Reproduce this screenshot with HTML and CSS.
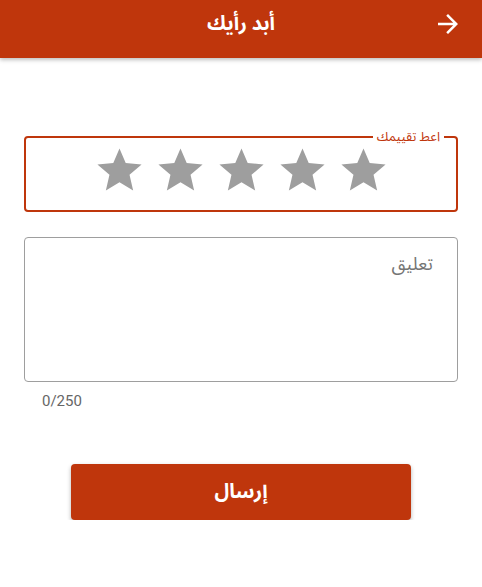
FILE: index.html
```html
<!DOCTYPE html>
<html lang="ar" dir="rtl">
<head>
<meta charset="utf-8">
<link rel="stylesheet" href="styles.css">
</head>
<body>
<header class="appbar">
  <button class="back" aria-label="رجوع">
    <svg viewBox="0 0 24 24" width="30" height="30"><path fill="#fff" d="M12 4l-1.41 1.41L16.17 11H4v2h12.17l-5.58 5.59L12 20l8-8z"/></svg>
  </button>
  <h1 class="title">أبد رأيك</h1>
</header>
<main class="content">
  <fieldset class="rating">
    <legend class="rating-label">اعط تقييمك</legend>
    <div class="stars">
      <svg class="star" viewBox="0 0 24 24"><path d="M12 17.27L18.18 21l-1.64-7.03L22 9.24l-7.19-.61L12 2 9.19 8.63 2 9.24l5.46 4.73L5.82 21z"/></svg>
      <svg class="star" viewBox="0 0 24 24"><path d="M12 17.27L18.18 21l-1.64-7.03L22 9.24l-7.19-.61L12 2 9.19 8.63 2 9.24l5.46 4.73L5.82 21z"/></svg>
      <svg class="star" viewBox="0 0 24 24"><path d="M12 17.27L18.18 21l-1.64-7.03L22 9.24l-7.19-.61L12 2 9.19 8.63 2 9.24l5.46 4.73L5.82 21z"/></svg>
      <svg class="star" viewBox="0 0 24 24"><path d="M12 17.27L18.18 21l-1.64-7.03L22 9.24l-7.19-.61L12 2 9.19 8.63 2 9.24l5.46 4.73L5.82 21z"/></svg>
      <svg class="star" viewBox="0 0 24 24"><path d="M12 17.27L18.18 21l-1.64-7.03L22 9.24l-7.19-.61L12 2 9.19 8.63 2 9.24l5.46 4.73L5.82 21z"/></svg>
    </div>
  </fieldset>
  <div class="comment">
    <textarea class="comment-input" placeholder="تعليق"></textarea>
  </div>
  <div class="counter" dir="ltr">0/250</div>
  <div class="actions">
    <button class="submit">إرسال</button>
  </div>
</main>
</body>
</html>
```
FILE: styles.css
```css
* { box-sizing: border-box; }
html, body {
  margin: 0;
  padding: 0;
  background: #fff;
  font-family: Roboto, "Noto Sans Arabic", "DejaVu Sans", sans-serif;
}
.appbar {
  height: 58px;
  background: #bf360c;
  display: flex;
  align-items: center;
  justify-content: center;
  position: relative;
  box-shadow: 0 2px 4px rgba(0,0,0,0.25);
}
.title {
  margin: 0;
  color: #fff;
  font-size: 20px;
  font-weight: bold;
  line-height: 1;
  margin-top: -12px;
}
.back {
  position: absolute;
  right: 19px;
  top: 9px;
  background: none;
  border: 0;
  padding: 0;
  width: 30px;
  height: 30px;
  display: flex;
}
.content {
  padding: 0 24px;
}
.rating {
  margin: 71px 0 0;
  border: 2px solid #bf360c;
  border-radius: 4px;
  padding: 0 0 10px;
  height: 83px;
}
.rating-label {
  color: #bf360c;
  font-size: 13px;
  line-height: 16px;
  padding: 0 4px;
  margin-right: 12px;
}
.stars {
  display: flex;
  justify-content: center;
  gap: 8px;
  margin-top: -1px;
}
.star {
  width: 53px;
  height: 53px;
  fill: #9e9e9e;
}
.comment {
  margin-top: 25px;
}
.comment-input {
  display: block;
  width: 100%;
  height: 145px;
  border: 1px solid #9e9e9e;
  border-radius: 4px;
  resize: none;
  padding: 7px 24px;
  font-family: inherit;
  font-size: 18px;
  color: #333;
}
.comment-input::placeholder {
  color: #757575;
}
.counter {
  text-align: left;
  padding-left: 18px;
  margin-top: 10px;
  font-size: 15px;
  color: #666;
}
.actions {
  display: flex;
  justify-content: center;
  margin-top: 54px;
}
.submit {
  width: 340px;
  height: 56px;
  border: 0;
  border-radius: 4px;
  background: #bf360c;
  color: #fff;
  font-family: inherit;
  font-size: 20px;
  font-weight: bold;
  box-shadow: 0 2px 4px rgba(0,0,0,0.3);
}
```
